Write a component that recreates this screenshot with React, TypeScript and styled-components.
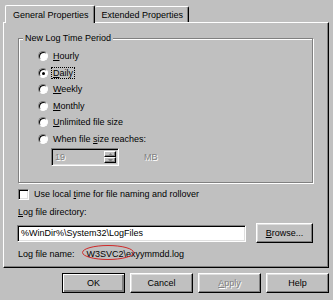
import React from "react";
import styled, { createGlobalStyle } from "styled-components";

const Global = createGlobalStyle`
  html, body { margin: 0; padding: 0; background: #c0c0c0; }
  body { font-family: "Liberation Sans", Arial, sans-serif; font-size: 9px; color: #000; }
  #root { width: 333px; height: 300px; overflow: hidden; }
`;

const Dialog = styled.div`
  width: 333px;
  height: 300px;
  box-sizing: border-box;
  padding: 5px 4px 0 3px;
  display: flex;
  flex-direction: column;
  background: #c0c0c0;
`;

const TabStrip = styled.div`
  display: flex;
  align-items: flex-end;
  height: 17px;
  padding-left: 2px;
  position: relative;
  z-index: 1;
`;

const Tab = styled.div<{ $active?: boolean }>`
  box-sizing: border-box;
  height: ${(p) => (p.$active ? 18 : 16)}px;
  margin-bottom: ${(p) => (p.$active ? -1 : 0)}px;
  padding: 0 5px 0 7px;
  display: flex;
  align-items: center;
  background: #c0c0c0;
  border-top: 1px solid #fff;
  border-left: ${(p) => (p.$active ? "1px solid #fff" : "none")};
  border-right: 1px solid #000;
  box-shadow: inset -1px 0 0 #808080;
  border-radius: 2px 2px 0 0;
  white-space: nowrap;
`;

const Panel = styled.div`
  box-sizing: border-box;
  width: 326px;
  height: 246px;
  border-top: 1px solid #fff;
  border-left: 1px solid #fff;
  border-right: 1px solid #000;
  border-bottom: 1px solid #000;
  box-shadow: inset -1px -1px 0 #808080;
  padding: 10px 15px 0 14px;
  display: flex;
  flex-direction: column;
`;

const Group = styled.fieldset`
  margin: 0;
  padding: 4px 0 16px 0;
  min-width: 0;
  border: 1px solid #808080;
  box-shadow: 1px 1px 0 #fff, inset 1px 1px 0 #fff;
`;

const Legend = styled.legend`
  margin-left: 4px;
  padding: 0 2px;
  line-height: 11px;
  background: #c0c0c0;
`;

const RadioList = styled.div`
  display: flex;
  flex-direction: column;
  padding-left: 19px;
`;

const Row = styled.div<{ $h?: number }>`
  display: flex;
  align-items: center;
  height: ${(p) => p.$h ?? 16.5}px;
  gap: 5px;
  white-space: nowrap;
`;

const Radio = styled.span<{ $checked?: boolean }>`
  box-sizing: border-box;
  width: 10px;
  height: 10px;
  border-radius: 50%;
  border: 1px solid;
  border-color: #808080 #fff #fff #808080;
  background: #fff;
  box-shadow: inset 1px 1px 0 #000;
  display: flex;
  align-items: center;
  justify-content: center;
  flex: none;
  &::after {
    content: "";
    display: ${(p) => (p.$checked ? "block" : "none")};
    width: 3px;
    height: 3px;
    border-radius: 50%;
    background: #000;
    margin: 1px 0 0 1px;
  }
`;

const Check = styled.span`
  box-sizing: border-box;
  width: 11px;
  height: 11px;
  border: 1px solid;
  border-color: #808080 #fff #fff #808080;
  background: #fff;
  box-shadow: inset 1px 1px 0 #000, inset -1px -1px 0 #dfdfdf;
  flex: none;
`;

const Focus = styled.span`
  outline: 1px dotted #000;
  outline-offset: 0;
  padding: 0 1px;
  margin-left: -1px;
`;

const U = styled.span`
  text-decoration: underline;
`;

const SpinRow = styled.div`
  display: flex;
  align-items: center;
  height: 18px;
  margin: 1px 0 0 13px;
`;

const Spin = styled.div`
  box-sizing: border-box;
  width: 68px;
  height: 18px;
  display: flex;
  border: 1px solid;
  border-color: #808080 #fff #fff #808080;
  box-shadow: inset 1px 1px 0 #000, inset -1px -1px 0 #dfdfdf;
  padding: 2px;
  background: #c0c0c0;
`;

const Disabled = styled.span`
  color: #808080;
  text-shadow: 1px 1px 0 #fff;
`;

const SpinText = styled(Disabled)`
  flex: 1;
  display: flex;
  align-items: center;
  padding-left: 1px;
`;

const SpinButtons = styled.div`
  width: 12px;
  display: flex;
  flex-direction: column;
`;

const SpinBtn = styled.div`
  flex: 1;
  box-sizing: border-box;
  border: 1px solid;
  border-color: #fff #000 #000 #fff;
  box-shadow: inset -1px -1px 0 #808080;
  display: flex;
  align-items: center;
  justify-content: center;
`;

const Mb = styled(Disabled)`
  margin-left: 25px;
`;

const CheckRow = styled(Row)`
  margin-top: 4px;
  gap: 5px;
`;

const Label = styled.div`
  height: 14px;
  display: flex;
  align-items: center;
  margin-top: 4px;
`;

const InputRow = styled.div`
  display: flex;
  align-items: center;
  height: 20px;
  margin-top: 4px;
  gap: 10px;
`;

const TextBox = styled.div`
  box-sizing: border-box;
  width: 231px;
  height: 17px;
  margin-left: -1px;
  border: 1px solid;
  border-color: #808080 #fff #fff #808080;
  box-shadow: inset 1px 1px 0 #000, inset -1px -1px 0 #dfdfdf;
  background: #fff;
  display: flex;
  align-items: center;
  padding-left: 3px;
  white-space: nowrap;
`;

const Button = styled.div<{ $w: number; $default?: boolean }>`
  box-sizing: border-box;
  width: ${(p) => p.$w}px;
  height: 20px;
  display: flex;
  align-items: center;
  justify-content: center;
  background: #c0c0c0;
  border: 1px solid;
  border-color: ${(p) => (p.$default ? "#000" : "#fff #000 #000 #fff")};
  box-shadow: ${(p) =>
    p.$default
      ? "inset 1px 1px 0 #fff, inset -2px -2px 0 #808080, inset -1px -1px 0 #000"
      : "inset -1px -1px 0 #808080, inset 1px 1px 0 #dfdfdf"};
  flex: none;
`;

const NameRow = styled.div`
  display: flex;
  align-items: center;
  height: 14px;
  margin-top: 4px;
  white-space: nowrap;
`;

const NameValue = styled.span`
  position: relative;
  margin-left: 12px;
`;

const Ellipse = styled.svg`
  position: absolute;
  left: -5px;
  top: -4px;
  overflow: visible;
`;

const ButtonRow = styled.div`
  display: flex;
  justify-content: flex-end;
  gap: 5px;
  margin-top: 5px;
`;

const Arrow = ({ up }: { up?: boolean }) => (
  <svg width="5" height="3" viewBox="0 0 5 3">
    <path d={up ? "M0 3 L2.5 0 L5 3 Z" : "M0 0 L5 0 L2.5 3 Z"} fill="#808080" />
  </svg>
);

export default function App() {
  return (
    <Dialog>
      <Global />
      <TabStrip>
        <Tab $active>General Properties</Tab>
        <Tab>Extended Properties</Tab>
      </TabStrip>
      <Panel>
        <Group>
          <Legend>New Log Time Period</Legend>
          <RadioList>
            <Row>
              <Radio />
              <span>
                <U>H</U>ourly
              </span>
            </Row>
            <Row>
              <Radio $checked />
              <Focus>
                <U>D</U>aily
              </Focus>
            </Row>
            <Row>
              <Radio />
              <span>
                <U>W</U>eekly
              </span>
            </Row>
            <Row>
              <Radio />
              <span>
                <U>M</U>onthly
              </span>
            </Row>
            <Row>
              <Radio />
              <span>
                <U>U</U>nlimited file size
              </span>
            </Row>
            <Row>
              <Radio />
              <span>
                When file <U>s</U>ize reaches:
              </span>
            </Row>
            <SpinRow>
              <Spin>
                <SpinText>19</SpinText>
                <SpinButtons>
                  <SpinBtn>
                    <Arrow up />
                  </SpinBtn>
                  <SpinBtn>
                    <Arrow />
                  </SpinBtn>
                </SpinButtons>
              </Spin>
              <Mb>MB</Mb>
            </SpinRow>
          </RadioList>
        </Group>
        <CheckRow $h={14}>
          <Check />
          <span>
            Use local <U>t</U>ime for file naming and rollover
          </span>
        </CheckRow>
        <Label>
          <span>
            <U>L</U>og file directory:
          </span>
        </Label>
        <InputRow>
          <TextBox>%WinDir%\System32\LogFiles</TextBox>
          <Button $w={57}>
            <span>
              <U>B</U>rowse...
            </span>
          </Button>
        </InputRow>
        <NameRow>
          <span>Log file name:</span>
          <NameValue>
            W3SVC2\exyymmdd.log
            <Ellipse width="52" height="15" viewBox="0 0 52 15">
              <ellipse cx="26" cy="7.5" rx="25.5" ry="7" fill="none" stroke="#d02828" strokeWidth="1" />
            </Ellipse>
          </NameValue>
        </NameRow>
      </Panel>
      <ButtonRow>
        <Button $w={63} $default>
          OK
        </Button>
        <Button $w={63}>Cancel</Button>
        <Button $w={63}>
          <Disabled>
            <U>A</U>pply
          </Disabled>
        </Button>
        <Button $w={63}>Help</Button>
      </ButtonRow>
    </Dialog>
  );
}
